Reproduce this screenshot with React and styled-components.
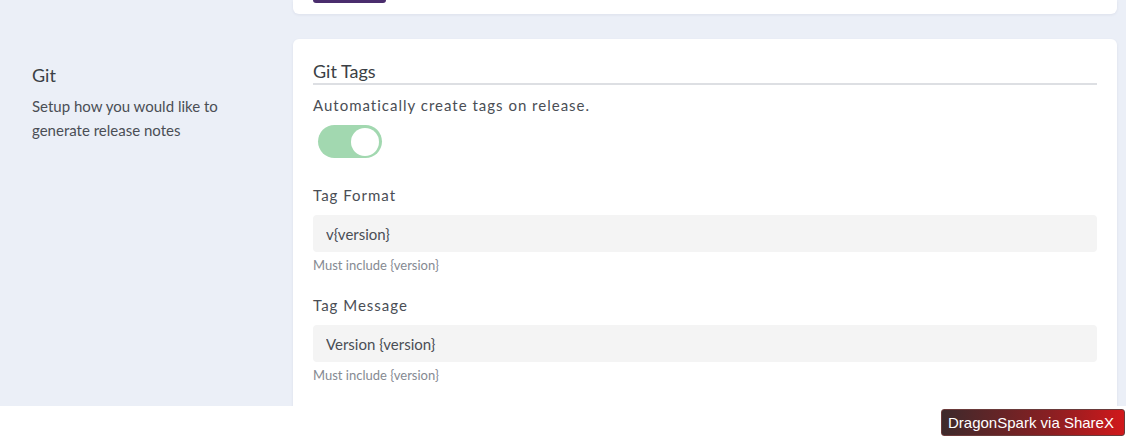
import React from "react";
import styled, { createGlobalStyle } from "styled-components";

const GlobalStyle = createGlobalStyle`
  html, body {
    margin: 0;
    padding: 0;
    background: #fff;
    font-family: "Lato", "Noto Sans", sans-serif;
  }
`;

const Page = styled.div`
  width: 1126px;
  height: 437px;
  background: #fff;
  display: flex;
  flex-direction: column;
  overflow: hidden;
`;

const Settings = styled.main`
  height: 406px;
  flex-shrink: 0;
  background: #ebeff7;
  overflow: hidden;
  display: flex;
  flex-direction: column;
  gap: 25px;
`;

const Row = styled.section`
  display: grid;
  grid-template-columns: 293px 824px;
`;

const Aside = styled.div`
  padding: 25px 0 0 32px;
`;

const AsideTitle = styled.h3`
  margin: 0;
  font-size: 18px;
  font-weight: 400;
  color: #3b3f45;
  line-height: 22px;
`;

const AsideText = styled.p`
  margin: 8px 0 0;
  font-size: 15px;
  color: #4a4e55;
  line-height: 24px;
  width: 200px;
`;

const Card = styled.div`
  background: #fff;
  border-radius: ${(p) => (p.cut ? "0 0 6px 6px" : "6px")};
  box-shadow: 0 1px 3px rgba(60, 70, 100, 0.08);
  padding: ${(p) => (p.cut ? "0 20px" : "20px 20px 30px")};
  height: ${(p) => (p.cut ? "14px" : "auto")};
  box-sizing: border-box;
`;

const PurpleButton = styled.div`
  width: 73px;
  height: 3px;
  background: #4a2d6d;
  border-radius: 0 0 5px 5px;
`;

const CardTitle = styled.h4`
  margin: 0;
  font-size: 18px;
  font-weight: 400;
  color: #3b3f45;
  line-height: 24px;
  border-bottom: 2px solid #dddfe3;
`;

const Hint = styled.p`
  margin: 9px 0 0;
  font-size: 15px;
  letter-spacing: 1px;
  color: #4a4e55;
  line-height: 22px;
`;

const Toggle = styled.div`
  margin: 9px 0 0 5px;
  width: 64px;
  height: 33px;
  border-radius: 17px;
  background: #a2d8b0;
  display: flex;
  align-items: center;
  justify-content: flex-end;
  padding: 0 3px;
  box-sizing: border-box;
`;

const Knob = styled.div`
  width: 28px;
  height: 28px;
  border-radius: 50%;
  background: #fff;
`;

const Field = styled.div`
  margin-top: ${(p) => p.top}px;
`;

const Label = styled.label`
  display: block;
  font-size: 15px;
  letter-spacing: 1px;
  color: #4a4e55;
  line-height: 22px;
`;

const Input = styled.input`
  display: block;
  margin-top: 9px;
  width: 100%;
  height: 37px;
  box-sizing: border-box;
  border: none;
  border-radius: 4px;
  background: #f4f4f4;
  padding: 0 13px;
  font-family: "Lato", "Noto Sans", sans-serif;
  font-size: 15px;
  color: #4a4e55;
  outline: none;
`;

const Help = styled.small`
  display: block;
  margin-top: 5px;
  font-size: 13px;
  color: #858a92;
  line-height: 16px;
`;

const Footer = styled.footer`
  flex: 1;
  display: flex;
  justify-content: flex-end;
  align-items: flex-start;
  padding: 3px 1px 0 0;
`;

const Watermark = styled.div`
  width: 184px;
  height: 27px;
  box-sizing: border-box;
  border: 1px solid #6a3a3a;
  border-radius: 3px;
  background: linear-gradient(90deg, #3d2a2c 0%, #8a1f22 60%, #d1181b 100%);
  color: #fff;
  font-family: "Liberation Sans", Arial, sans-serif;
  font-size: 15px;
  line-height: 25px;
  padding-left: 6px;
  white-space: nowrap;
`;

export default function App() {
  return (
    <Page>
      <GlobalStyle />
      <Settings>
        <Row>
          <div />
          <Card cut>
            <PurpleButton />
          </Card>
        </Row>
        <Row>
          <Aside>
            <AsideTitle>Git</AsideTitle>
            <AsideText>Setup how you would like to generate release notes</AsideText>
          </Aside>
          <Card>
            <CardTitle>Git Tags</CardTitle>
            <Hint>Automatically create tags on release.</Hint>
            <Toggle>
              <Knob />
            </Toggle>
            <Field top={26}>
              <Label>Tag Format</Label>
              <Input defaultValue="v{version}" />
              <Help>Must include {"{version}"}</Help>
            </Field>
            <Field top={21}>
              <Label>Tag Message</Label>
              <Input defaultValue="Version {version}" />
              <Help>Must include {"{version}"}</Help>
            </Field>
          </Card>
        </Row>
      </Settings>
      <Footer>
        <Watermark>DragonSpark via ShareX</Watermark>
      </Footer>
    </Page>
  );
}
